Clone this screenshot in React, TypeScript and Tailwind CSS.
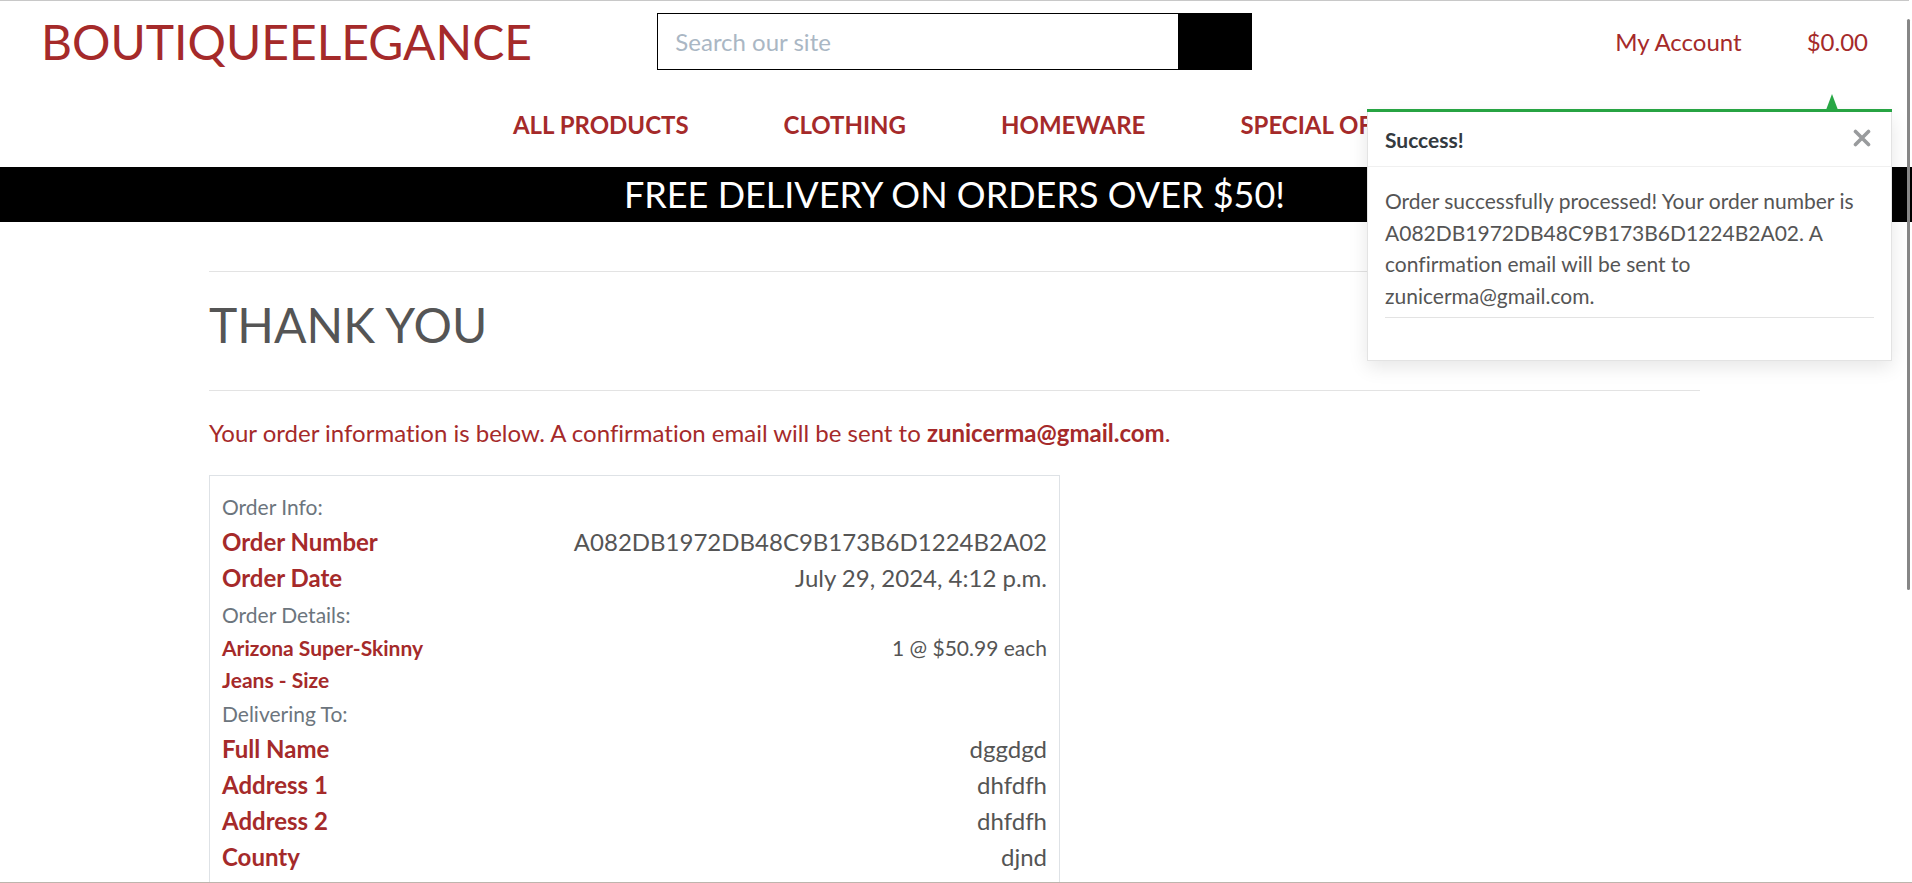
import type { ReactNode } from "react";

const navLinks = ["ALL PRODUCTS", "CLOTHING", "HOMEWARE", "SPECIAL OFFERS"];

const delivery = [
  { label: "Full Name", value: "dggdgd" },
  { label: "Address 1", value: "dhfdfh" },
  { label: "Address 2", value: "dhfdfh" },
  { label: "County", value: "djnd" },
];

function Header() {
  return (
    <header className="border-t border-[#c8c8c8]">
      <div className="grid grid-cols-3 items-center px-[21px] pt-3">
        <a href="#home" className="pl-5 text-[48px] leading-[57px] text-[#a52a2a]">
          BOUTIQUEELEGANCE
        </a>
        <form className="mx-[14px] flex h-[57px] border border-black">
          <input
            type="text"
            aria-label="Search our site"
            placeholder="Search our site"
            className="min-w-0 flex-1 px-[17px] outline-none placeholder:text-[#aab7c4]"
          />
          <button type="button" aria-label="Search" className="w-[73px] bg-black" />
        </form>
        <ul className="flex justify-end gap-[65px] pr-5 text-[#a52a2a]">
          <li>
            <a href="#account">My Account</a>
          </li>
          <li>
            <a href="#bag">$0.00</a>
          </li>
        </ul>
      </div>
      <nav className="flex h-[97px] items-center justify-center gap-[95px] pt-[13px] pl-8 font-bold text-[#a52a2a]">
        {navLinks.map((name) => (
          <a key={name} href="#shop">
            {name}
          </a>
        ))}
      </nav>
    </header>
  );
}

function Row({ label, value }: { label: string; value: string }) {
  return (
    <div className="flex justify-between">
      <dt className="font-bold text-[#a52a2a]">{label}</dt>
      <dd>{value}</dd>
    </div>
  );
}

function SectionLabel({ children }: { children: ReactNode }) {
  return (
    <h3 className="text-[#6c757d]">
      <small className="text-[21px] leading-none">{children}</small>
    </h3>
  );
}

function Toast() {
  return (
    <aside role="status" className="absolute right-5 top-[109px] w-[525px] text-[21px]">
      <svg viewBox="0 0 12 16" className="absolute -top-[15px] right-[54px] h-4 w-3" aria-hidden="true">
        <path d="M6 0 L12 16 H0 Z" fill="#28a745" />
      </svg>
      <div className="h-[3px] bg-[#28a745]" />
      <div className="border border-t-0 border-[#e3e3e3] bg-white shadow-[0_6px_18px_rgba(0,0,0,0.1)]">
        <div className="flex h-[55px] items-center justify-between border-b border-[#f0f0f0] px-[17px]">
          <strong className="pt-[2px] text-[#343a40]">Success!</strong>
          <button type="button" aria-label="Close" className="mr-[3px] pb-[2px]">
            <svg viewBox="0 0 18 18" className="h-[18px] w-[18px]" aria-hidden="true">
              <path d="M2.5 2.5 L15.5 15.5 M15.5 2.5 L2.5 15.5" stroke="#999b9d" strokeWidth="3.6" strokeLinecap="round" />
            </svg>
          </button>
        </div>
        <div className="px-[17px] pt-[18px] pb-[42px]">
          <p className="leading-normal text-[#555]">
            Order successfully processed! Your order number is A082DB1972DB48C9B173B6D1224B2A02. A
            confirmation email will be sent to zunicerma@gmail.com.
          </p>
          <hr className="mt-[6px] border-[#e3e3e3]" />
        </div>
      </div>
    </aside>
  );
}

export default function App() {
  return (
    <div className="relative h-screen overflow-hidden bg-white font-['Lato',sans-serif] text-[24px] leading-[36px] text-[#555] [font-variant-ligatures:none]">
      <div className="pr-[3px]">
        <Header />
      </div>
      <div className="bg-black py-[6px] pr-[3px] text-center text-[36px] leading-[43px] text-white">
        <h2>FREE DELIVERY ON ORDERS OVER $50!</h2>
      </div>
      <main className="pr-[3px]">
        <div className="mx-auto max-w-[1491px] pt-[49px]">
          <hr className="border-[#e3e3e3]" />
          <h1 className="pt-6 pb-9 text-[48px] leading-[58px]">THANK YOU</h1>
          <hr className="border-[#e3e3e3]" />
          <p className="py-6 text-[#a52a2a]">
            Your order information is below. A confirmation email will be sent to <strong>zunicerma@gmail.com</strong>.
          </p>
          <section className="max-w-[851px] border border-[#dee2e6] p-3">
            <SectionLabel>Order Info:</SectionLabel>
            <dl>
              <Row label="Order Number" value="A082DB1972DB48C9B173B6D1224B2A02" />
              <Row label="Order Date" value="July 29, 2024, 4:12 p.m." />
            </dl>
            <SectionLabel>Order Details:</SectionLabel>
            <dl className="flex justify-between text-[21px] leading-normal">
              <dt className="w-60 font-bold text-[#a52a2a]">Arizona Super-Skinny Jeans - Size</dt>
              <dd>1 @ $50.99 each</dd>
            </dl>
            <SectionLabel>Delivering To:</SectionLabel>
            <dl>
              {delivery.map((row) => (
                <Row key={row.label} label={row.label} value={row.value} />
              ))}
            </dl>
          </section>
        </div>
      </main>
      <Toast />
      <div className="absolute right-[2px] top-[19px] h-[571px] w-[3px] rounded-full bg-[#868686]" />
      <div className="absolute inset-x-0 bottom-0 h-px bg-[#bdb5ad]" />
    </div>
  );
}
